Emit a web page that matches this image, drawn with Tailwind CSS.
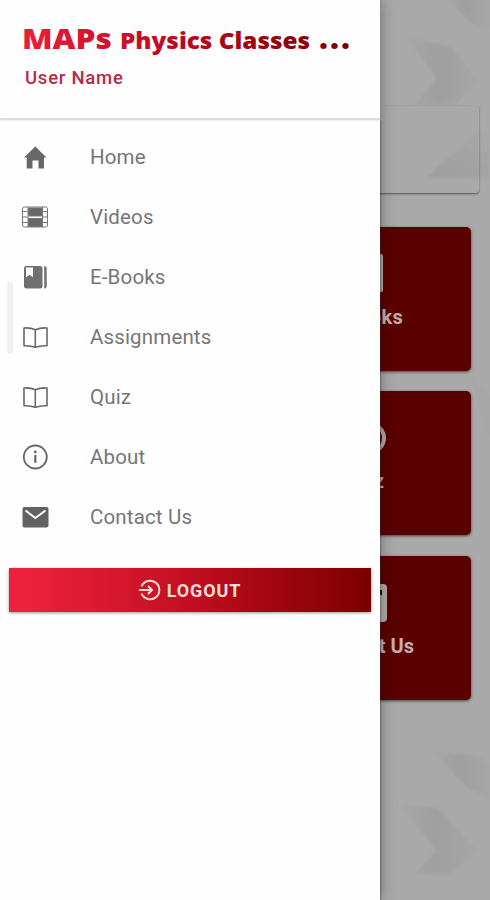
<!DOCTYPE html>
<html lang="en">
<head>
    <meta charset="UTF-8">
    <meta name="viewport" content="width=device-width, initial-scale=1.0">
    <title>MAPs Physics Classes</title>
    <script src="https://cdn.jsdelivr.net/npm/@tailwindcss/browser@4"></script>
</head>
<body class="relative h-[900px] w-[490px] overflow-hidden bg-[#a9a9a9] font-[Roboto,sans-serif]">

    <!-- Background pattern -->
    <svg class="absolute inset-0" width="490" height="900" viewBox="0 0 490 900">
        <defs>
            <linearGradient id="chevron" x1="0" x2="1" y1="0" y2="0">
                <stop offset="0" stop-color="#a7a7a7"/>
                <stop offset=".45" stop-color="#9f9f9f"/>
                <stop offset="1" stop-color="#a6a6a6"/>
            </linearGradient>
            <linearGradient id="fold" x1="0" x2="1" y1="1" y2="0">
                <stop offset="0" stop-color="#9d9d9d"/>
                <stop offset="1" stop-color="#a9a9a9"/>
            </linearGradient>
            <filter id="soft"><feGaussianBlur stdDeviation="1.5"/></filter>
        </defs>
        <g filter="url(#soft)">
            <path d="M446 -2L490 -2V30L472 24Z" fill="url(#chevron)"/>
            <path d="M405 37L450 46L479 82L455 105H414L437 79Z" fill="url(#chevron)"/>
            <path d="M427 178L478 130L490 124V178Z" fill="url(#fold)"/>
            <path d="M434 752L480 756L490 764V800L466 787Z" fill="url(#chevron)"/>
            <path d="M400 805L438 808L478 851L450 875L414 874L437 850Z" fill="url(#chevron)"/>
            <path d="M471 380L490 395V440Z" fill="#a6a6a6"/>
        </g>
    </svg>

    <!-- Dashboard behind the drawer -->
    <main class="relative flex flex-col pt-[106px] pr-[19px]">
        <div class="-mr-[8px] ml-2 h-[87px] rounded-[3px] shadow-[0_1px_2px_#555]"></div>
        <div class="mt-[33.5px] ml-[255px] flex flex-col gap-[20.5px]">
            <a class="flex h-[144px] flex-col items-end rounded-[5px] bg-[#5b0000] pt-[27px] pr-[68px] text-[20px] font-bold text-[#c2b0b0] shadow-[0_1px_3px_#444]">
                <svg class="mr-[20px]" width="38" height="38" viewBox="0 0 38 38" fill="#b5aaaa"><rect width="38" height="38" rx="2"/></svg>
                <span class="mt-[13px] leading-6 tracking-[.3px]">E-Books</span>
            </a>
            <a class="flex h-[144px] flex-col items-end rounded-[5px] bg-[#5b0000] pt-[31px] pr-[87px] text-[20px] font-bold text-[#c2b0b0] shadow-[0_1px_3px_#444]">
                <svg class="-mr-[2px]" width="32" height="32" viewBox="0 0 32 32" fill="none" stroke="#b5aaaa" stroke-width="4"><circle cx="16" cy="16" r="14"/></svg>
                <span class="mt-[15px] leading-6">Quiz</span>
            </a>
            <a class="flex h-[144px] flex-col items-end rounded-[5px] bg-[#5b0000] pt-[28px] pr-[57px] text-[20px] font-bold text-[#c2b0b0] shadow-[0_1px_3px_#444]">
                <svg class="mr-[27px]" width="38" height="38" viewBox="0 0 38 38"><rect width="38" height="38" rx="4" fill="#b5aaaa"/><rect x="4" y="6" width="29" height="5" fill="#220000"/></svg>
                <span class="mt-[12px] leading-6">Contact Us</span>
            </a>
        </div>
    </main>

    <!-- Drawer -->
    <aside class="absolute inset-y-0 left-0 w-[380px] bg-[#fefefe] shadow-[0_0_2px_#333,0_0_16px_rgba(0,0,0,.35)]">
        <header class="h-[119px] border-b border-[#dcdcdc] pt-[12px] shadow-[0_1px_2px_#ccc]">
            <h1 class="ml-[22px]">
                <svg class="overflow-visible font-['Open_Sans',sans-serif] font-extrabold" width="345" height="46" viewBox="0 0 345 46" fill="url(#brand)">
                    <defs>
                        <linearGradient id="brand" gradientUnits="userSpaceOnUse" x1="0" x2="328" y1="0" y2="0">
                            <stop offset="0" stop-color="#ec1d3b"/>
                            <stop offset=".5" stop-color="#b9081c"/>
                            <stop offset="1" stop-color="#7b0000"/>
                        </linearGradient>
                    </defs>
                    <text x="0" y="37" font-size="28" textLength="90" lengthAdjust="spacingAndGlyphs">MAPs</text>
                    <text x="98" y="37" font-size="22" textLength="190" lengthAdjust="spacingAndGlyphs">Physics Classes</text>
                    <text x="297" y="37" font-size="31" letter-spacing="2">...</text>
                </svg>
            </h1>
            <p class="mt-[8px] ml-[25px] text-[18.5px] leading-6 font-medium tracking-[.75px] text-[#b52b47]">User Name</p>
        </header>

        <nav class="pt-[8px] text-[20.5px] tracking-[.15px] text-[#767676]">
            <a class="flex h-[60px] items-center pl-[22px]">
                <svg class="mr-[42px]" width="26" height="26" viewBox="0 0 26 26" fill="#686868"><path d="M13.3 2.5L24.5 13.5H22V24.5H16.5V16.5H10.5V24.5H4.7V13.5H2L13.3 2.5Z"/></svg>
                Home
            </a>
            <a class="flex h-[60px] items-center pl-[22px]">
                <svg class="mr-[42px]" width="26" height="26" viewBox="0 0 26 26" fill="none" stroke="#777"><rect x=".5" y="3" width="25" height="20" rx="2"/><path d="M6 3V23M20.5 3V23M1 7.5H5.5M1 13H5.5M1 18.5H5.5M21 7.5H25.5M21 13H25.5M21 18.5H25.5"/><path d="M6.5 4H20V12H6.5ZM6.5 14.5H20V22.5H6.5Z" fill="#686868"/></svg>
                Videos
            </a>
            <a class="flex h-[60px] items-center pl-[22px]">
                <svg class="mr-[42px]" width="26" height="26" viewBox="0 0 26 26"><path d="M4.5 2H18Q20.5 2 20.5 4.5V22Q20.5 24.5 18 24.5H4.5Q2 24.5 2 22V4.5Q2 2 4.5 2Z" fill="#707070"/><path d="M4 3.5H11V13.2L7.5 10.8L4 13.2Z" fill="#fefefe"/><path d="M22.2 2Q24.7 2 24.7 4.5V22Q24.7 24.5 22.2 24.5Z" fill="#707070"/></svg>
                E-Books
            </a>
            <a class="flex h-[60px] items-center pl-[22px]">
                <svg class="mr-[42px]" width="26" height="26" viewBox="0 0 26 26" fill="none" stroke="#686868" stroke-width="1.6" stroke-linejoin="round"><path d="M13.3 5.7Q8 3.4 2 4V21.8Q8 21.4 13.3 23.3Q19 21.4 25 21.8V4Q19 3.4 13.3 5.7ZM13.3 5.7V23"/></svg>
                Assignments
            </a>
            <a class="flex h-[60px] items-center pl-[22px]">
                <svg class="mr-[42px]" width="26" height="26" viewBox="0 0 26 26" fill="none" stroke="#686868" stroke-width="1.6" stroke-linejoin="round"><path d="M13.3 5.7Q8 3.4 2 4V21.8Q8 21.4 13.3 23.3Q19 21.4 25 21.8V4Q19 3.4 13.3 5.7ZM13.3 5.7V23"/></svg>
                Quiz
            </a>
            <a class="flex h-[60px] items-center pl-[22px]">
                <svg class="mr-[42px]" width="26" height="26" viewBox="0 0 26 26" fill="none" stroke="#686868" stroke-width="1.8"><circle cx="13.3" cy="13" r="11.5"/><path d="M13.3 11V18.8" stroke-width="2.2"/><circle cx="13.3" cy="8" r="1.4" fill="#686868" stroke="none"/></svg>
                About
            </a>
            <a class="flex h-[60px] items-center pl-[22px]">
                <svg class="mr-[42px]" width="27" height="26" viewBox="0 0 27 26"><rect x=".5" y="3" width="26" height="20.5" rx="2" fill="#626262"/><path d="M3.5 6.5L13.3 14L23.5 6.5" fill="none" stroke="#fefefe" stroke-width="2"/></svg>
                <span class="-ml-px">Contact Us</span>
            </a>
        </nav>

        <button class="mt-[21px] ml-[9px] flex h-[44px] w-[362px] items-center justify-center gap-[6px] bg-linear-to-r from-[#ed213d] from-5% via-[#c20e20] via-50% to-[#7c0000] text-[18px] font-bold tracking-[.9px] text-[#fbdcd8] shadow-[0_1px_3px_#999]">
            <svg width="22" height="22" viewBox="0 0 22 22" fill="none" stroke="#fbdcd8" stroke-width="2"><path d="M2.5 7.3A9.3 9.3 0 1 1 2.5 14.7M0 11H13M9 7L13 11L9 15"/></svg>
            LOGOUT
        </button>

        <div class="absolute top-[282px] left-[7px] h-[72px] w-[6px] rounded-sm bg-[#f0f0f0]"></div>
    </aside>
</body>
</html>
